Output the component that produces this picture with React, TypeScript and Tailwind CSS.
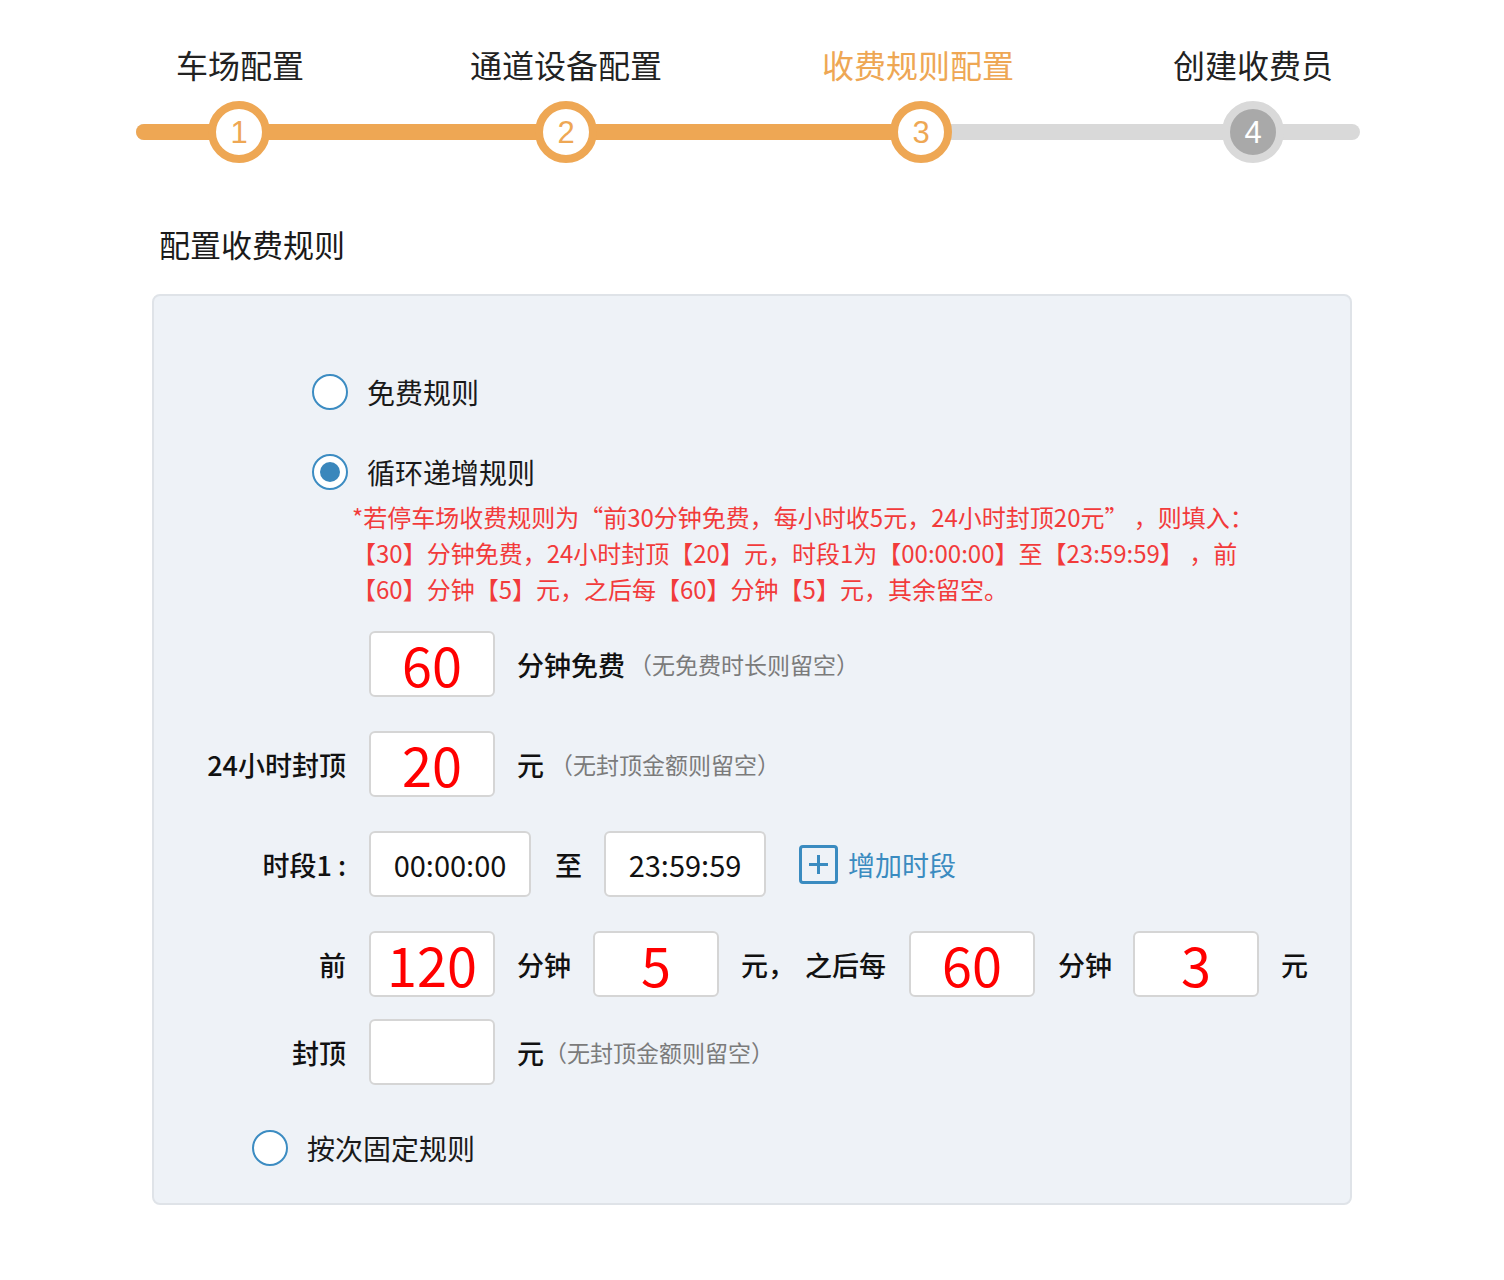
import React from 'react';

const ORANGE = 'bg-[#eea754]';

const StepCircle: React.FC<{ n: number; done?: boolean; left: string }> = ({ n, done = true, left }) => (
  <div
    className={`absolute top-[-23px] ${left} w-[62px] h-[62px] rounded-full border-[8px] flex items-center justify-center font-['Liberation_Sans',sans-serif] text-[31px] leading-none ${
      done ? 'border-[#eea754] bg-white text-[#eea754]' : 'border-[#d9d9d9] bg-[#a9a9a9] text-white'
    }`}
  >
    {n}
  </div>
);

const Radio: React.FC<{ checked?: boolean }> = ({ checked }) => (
  <div className="w-[36px] h-[36px] rounded-full border-2 border-[#3c8cc2] bg-white flex items-center justify-center shrink-0">
    {checked && <div className="w-[20px] h-[20px] rounded-full bg-[#3a87bc]" />}
  </div>
);

const NumBox: React.FC<{ value?: string; className?: string }> = ({ value, className = '' }) => (
  <div
    className={`w-[126px] h-[66px] shrink-0 bg-white border-2 border-[#d5d5d5] rounded-[6px] flex items-center justify-center text-[54px] leading-none text-[#ff0000] ${className}`}
  >
    {value}
  </div>
);

const TimeBox: React.FC<{ value: string; className?: string }> = ({ value, className = '' }) => (
  <div
    className={`w-[162px] h-[66px] shrink-0 bg-white border-2 border-[#d5d5d5] rounded-[6px] flex items-center justify-center text-[29px] leading-none text-[#111] ${className}`}
  >
    {value}
  </div>
);

const Label: React.FC<{ children: React.ReactNode }> = ({ children }) => (
  <div className="w-[192px] shrink-0 text-right text-[27px] leading-none font-medium text-[#111]">{children}</div>
);

const Unit: React.FC<{ children: React.ReactNode; className?: string }> = ({ children, className = '' }) => (
  <span className={`text-[27px] leading-none font-medium text-[#111] shrink-0 ${className}`}>{children}</span>
);

const Hint: React.FC<{ children: React.ReactNode; className?: string }> = ({ children, className = '' }) => (
  <span className={`text-[23px] leading-none text-[#7b7b7b] shrink-0 ${className}`}>{children}</span>
);

const App: React.FC = () => {
  return (
    <div className="w-[1504px] min-h-[1280px] bg-white font-['Noto_Sans_CJK_SC',sans-serif] text-[#222]">
      {/* Stepper */}
      <div className="pt-[48px]">
        <div className="flex h-[32px] text-[32px] leading-none">
          <div className="ml-[120px] w-[240px] text-center">车场配置</div>
          <div className="ml-[86px] w-[240px] text-center">通道设备配置</div>
          <div className="ml-[112px] w-[240px] text-center text-[#eea754]">收费规则配置</div>
          <div className="ml-[95px] w-[240px] text-center">创建收费员</div>
        </div>
        <div className="relative mt-[44px] ml-[136px] w-[1224px] h-4 rounded-full bg-[#d9d9d9]">
          <div className={`h-4 w-[785px] rounded-l-full ${ORANGE}`} />
          <StepCircle n={1} left="left-[72px]" />
          <StepCircle n={2} left="left-[399px]" />
          <StepCircle n={3} left="left-[754px]" />
          <StepCircle n={4} done={false} left="left-[1086px]" />
        </div>
      </div>

      {/* Title */}
      <div className="mt-[88px] ml-[159px] text-[31px] leading-none text-[#1a1a1a]">配置收费规则</div>

      {/* Panel */}
      <div className="mt-[35px] ml-[152px] w-[1200px] h-[911px] bg-[#eef2f7] border-2 border-[#dfe3e8] rounded-[8px] pt-[78px]">
        <div className="flex items-center ml-[158px] h-[36px]">
          <Radio />
          <span className="ml-[19px] text-[28px] leading-none text-[#1a1a1a]">免费规则</span>
        </div>
        <div className="flex items-center ml-[158px] h-[36px] mt-[44px]">
          <Radio checked />
          <span className="ml-[19px] text-[28px] leading-none text-[#1a1a1a]">循环递增规则</span>
        </div>
        <div className="ml-[198px] mt-[9px] text-[24px] leading-[36px] text-[#f23b3b] whitespace-nowrap">
          *若停车场收费规则为“前30分钟免费，每小时收5元，24小时封顶20元” ，则填入：
          <br />
          【30】分钟免费，24小时封顶【20】元，时段1为【00:00:00】至【23:59:59】 ，前
          <br />
          【60】分钟【5】元，之后每【60】分钟【5】元，其余留空。
        </div>

        {/* Row 1 */}
        <div className="flex items-center mt-[24px] h-[66px]">
          <div className="w-[192px] shrink-0" />
          <NumBox value="60" className="ml-[23px]" />
          <Unit className="ml-[22px]">分钟免费</Unit>
          <Hint className="ml-[4px]">（无免费时长则留空）</Hint>
        </div>

        {/* Row 2 */}
        <div className="flex items-center mt-[34px] h-[66px]">
          <Label>24小时封顶</Label>
          <NumBox value="20" className="ml-[23px]" />
          <Unit className="ml-[22px]">元</Unit>
          <Hint className="ml-[6px]">（无封顶金额则留空）</Hint>
        </div>

        {/* Row 3 */}
        <div className="flex items-center mt-[34px] h-[66px]">
          <Label>时段1 :</Label>
          <TimeBox value="00:00:00" className="ml-[23px]" />
          <Unit className="ml-[24px]">至</Unit>
          <TimeBox value="23:59:59" className="ml-[22px]" />
          <div className="ml-[33px] w-[39px] h-[39px] border-[3px] border-[#3a8bc0] rounded-[4px] flex items-center justify-center">
            <svg width="21" height="21" viewBox="0 0 21 21">
              <path d="M10.5 1v19M1 10.5h19" stroke="#3a8bc0" strokeWidth="3" />
            </svg>
          </div>
          <span className="ml-[10px] text-[27px] leading-none text-[#3a8bc0]">增加时段</span>
        </div>

        {/* Row 4 */}
        <div className="flex items-center mt-[34px] h-[66px]">
          <Label>前</Label>
          <NumBox value="120" className="ml-[23px]" />
          <Unit className="ml-[22px]">分钟</Unit>
          <NumBox value="5" className="ml-[22px]" />
          <Unit className="ml-[22px]">元，</Unit>
          <Unit className="ml-[10px]">之后每</Unit>
          <NumBox value="60" className="ml-[23px]" />
          <Unit className="ml-[23px]">分钟</Unit>
          <NumBox value="3" className="ml-[21px]" />
          <Unit className="ml-[22px]">元</Unit>
        </div>

        {/* Row 5 */}
        <div className="flex items-center mt-[22px] h-[66px]">
          <Label>封顶</Label>
          <NumBox className="ml-[23px]" />
          <Unit className="ml-[22px]">元</Unit>
          <Hint>（无封顶金额则留空）</Hint>
        </div>

        <div className="flex items-center ml-[98px] h-[36px] mt-[45px]">
          <Radio />
          <span className="ml-[19px] text-[28px] leading-none text-[#1a1a1a]">按次固定规则</span>
        </div>
      </div>
    </div>
  );
};

export default App;
